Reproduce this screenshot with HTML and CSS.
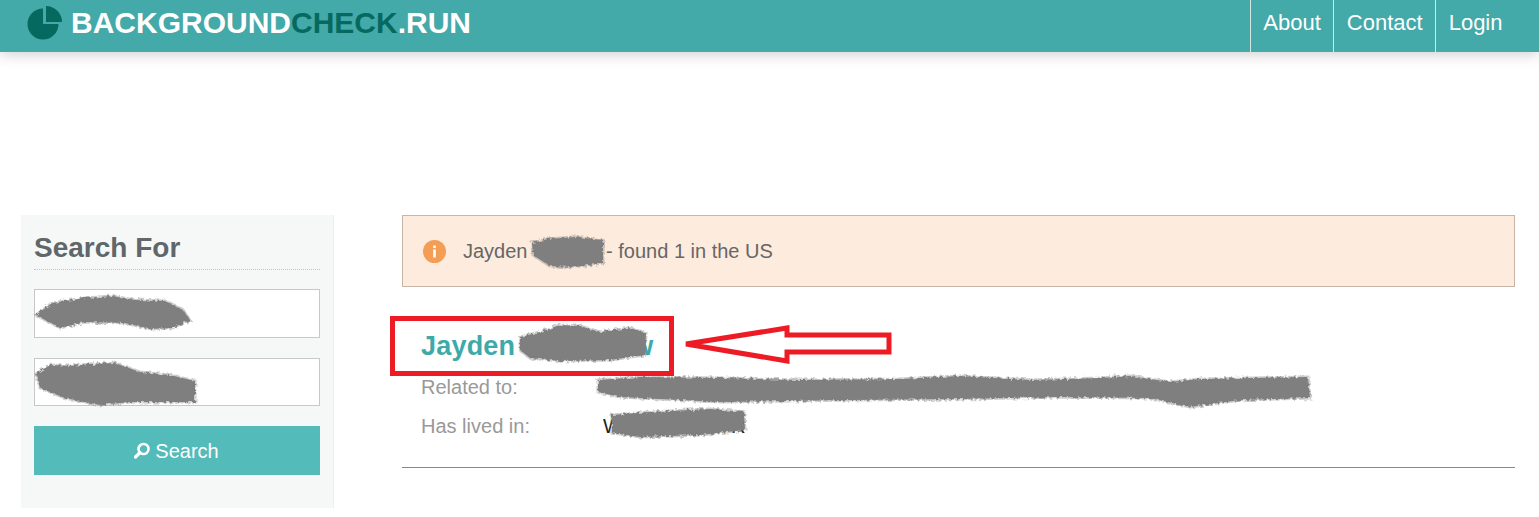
FILE: index.html
```html
<!DOCTYPE html>
<html lang="en">
<head>
<meta charset="utf-8">
<title>BackgroundCheck.run</title>
<link rel="stylesheet" href="styles.css">
</head>
<body>
<header class="topbar">
  <a class="brand" href="#">
    <svg class="brand-icon" width="36" height="36" viewBox="0 0 36 36"><path d="M16 3.500V19H31.500A15.500 15.500 0 1 1 16 3.500Z" fill="#06695f"/><path d="M19 1A16 16 0 0 1 35 17H19Z" fill="#06695f"/></svg>
    <span class="brand-text">BACKGROUND<span class="brand-dark">CHECK</span>.RUN</span>
  </a>
  <nav class="nav">
    <a href="#">About</a>
    <a href="#">Contact</a>
    <a href="#">Login</a>
  </nav>
</header>
<main class="page">
  <aside class="sidebar">
    <h2 class="sidebar-title">Search For</h2>
    <div class="field"></div>
    <div class="field"></div>
    <button class="search-btn" type="button">
      <svg class="search-icon" width="18" height="18" viewBox="0 0 18 18"><circle cx="10.500" cy="7" r="5" fill="none" stroke="#fff" stroke-width="2.600"/><path d="M7 10.500L2.500 15" stroke="#fff" stroke-width="3.200" stroke-linecap="round"/></svg>
      Search
    </button>
  </aside>
  <section class="results">
    <div class="alert">
      <svg width="23" height="23" viewBox="0 0 23 23"><circle cx="11.500" cy="11.500" r="11.500" fill="#f49d54"/><rect x="10.200" y="9.500" width="2.600" height="8" fill="#fff"/><rect x="10.200" y="5.500" width="2.600" height="2.600" fill="#fff"/></svg>
      <span class="alert-text">Jayden <span class="gap-a"></span>- found 1 in the US</span>
    </div>
    <article class="person">
      <h3 class="person-name">Jayden<span class="gap-b"></span>w</h3>
      <div class="person-row"><span class="person-label">Related to:</span></div>
      <div class="person-row"><span class="person-label">Has lived in:</span><span class="person-value">W<span class="gap-c"></span>R</span></div>
    </article>
  </section>
</main>
<svg class="markup" width="1539" height="517" viewBox="0 0 1539 517" aria-hidden="true">
  <defs>
    <filter id="rough" x="-5%" y="-30%" width="110%" height="160%">
      <feTurbulence type="fractalNoise" baseFrequency="0.3" numOctaves="2" seed="4"/>
      <feDisplacementMap in="SourceGraphic" scale="5"/>
      <feGaussianBlur stdDeviation="0.7"/>
    </filter>
  </defs>
  <g class="scribble" filter="url(#rough)">
    <path d="M36 315L52 303L85 298L112 296L135 300L165 301L183 310L190 320L172 328L150 329L125 323L85 322L60 328Z"/>
    <path d="M36 374L50 365L70 366L90 364L115 363L140 372L170 375L195 381V402H130L100 405L65 398L40 388Z"/>
    <path d="M532 243L548 239L575 237L603 240L603 263L575 267L550 266L533 255Z"/>
    <path d="M520 337L540 332L560 325L580 326L600 332L630 328L646 333L645 355L610 360L560 361L530 358L520 350Z"/>
    <path d="M598 380L640 377L720 378L800 380L900 379L960 376L1030 380L1100 378L1130 376L1170 382L1200 379L1308 377L1310 398L1240 400L1190 407L1150 398L1060 397L960 399L850 400L720 402L620 397L598 392Z"/>
    <path d="M612 415L650 412L710 409L744 412L745 430L700 435L640 437L612 433Z"/>
  </g>
  <rect class="mark-line" x="392.500" y="318.500" width="279" height="55" fill="none"/>
  <path class="mark-line" d="M686 344L787 328V335H889V352H787V361Z" fill="#fff"/>
</svg>
</body>
</html>
```
FILE: styles.css
```css
* { box-sizing: border-box; }
html, body { margin: 0; padding: 0; }
body {
  position: relative;
  width: 1539px;
  height: 517px;
  overflow: hidden;
  background: #fff;
  font-family: "Liberation Sans", Arial, sans-serif;
  font-size: 20px;
  color: #666;
}
.topbar {
  height: 52px;
  display: flex;
  justify-content: space-between;
  padding: 0 24px 0 27px;
  background: #43a9a9;
  box-shadow: 0 2px 14px rgba(0, 0, 0, 0.2);
}
.brand {
  display: flex;
  align-items: center;
  gap: 8px;
  color: #fff;
  font-size: 30px;
  font-weight: 700;
  text-decoration: none;
}
.brand-icon { flex: none; margin-top: -6px; }
.brand-text { padding-bottom: 6px; }
.brand-dark { color: #06695f; }
.nav { display: flex; }
.nav a {
  display: flex;
  align-items: center;
  padding: 0 12.500px;
  padding-bottom: 6px;
  border-left: 1px solid #d3e6e6;
  color: #fff;
  font-size: 22px;
  text-decoration: none;
}
.page {
  display: flex;
  align-items: flex-start;
  gap: 68px;
  padding: 163px 24px 0 21px;
}
.sidebar {
  flex: none;
  width: 313px;
  height: 293px;
  padding: 13px 13px 0;
  background: #f6f8f7;
  border-right: 1px solid #eeeeee;
}
.sidebar-title {
  margin: 0 0 19px;
  height: 42px;
  padding-top: 4px;
  border-bottom: 1px dotted #c4c4c4;
  color: #606669;
  font-size: 28px;
  line-height: 32px;
  font-weight: 700;
}
.field {
  width: 286px;
  height: 48.500px;
  margin-bottom: 20px;
  background: #fff;
  border: 1px solid #c8c8c8;
}
.search-btn {
  display: flex;
  align-items: center;
  justify-content: center;
  gap: 4px;
  width: 286px;
  height: 49px;
  padding: 2px 0 0;
  border: 0;
  background: #53bbb9;
  color: #fff;
  font: 20px "Liberation Sans", Arial, sans-serif;
}
.search-icon { margin-left: -2px; margin-top: -2px; }
.results { flex: 1; min-width: 0; }
.alert {
  display: flex;
  align-items: center;
  gap: 17px;
  height: 72px;
  padding: 0 20px;
  background: #fdebdd;
  border: 1px solid #c9b5a6;
}
.alert-text { color: #666; }
.gap-a { display: inline-block; width: 73px; }
.person {
  margin-top: 29px;
  height: 152px;
  padding: 14px 0 0 19px;
  border-bottom: 1px solid #3aa9a9;
}
.person-name {
  margin: 0 0 6px;
  color: #3ea9a9;
  font-size: 27px;
  line-height: 32px;
  font-weight: 700;
  letter-spacing: 0.2px;
}
.gap-b { display: inline-block; width: 117px; }
.person-row {
  display: flex;
  height: 38px;
  margin-bottom: 1px;
  align-items: center;
  color: #999;
}
.person-label { width: 182px; flex: none; }
.person-value { color: #222; }
.gap-c { display: inline-block; width: 109px; }
.markup {
  position: absolute;
  left: 0;
  top: 0;
  pointer-events: none;
}
.scribble path {
  fill: #7f7f7f;
  stroke: #7f7f7f;
  stroke-opacity: 0.4;
  stroke-width: 3;
}
.mark-line {
  stroke: #ed1c24;
  stroke-width: 5;
}
```
